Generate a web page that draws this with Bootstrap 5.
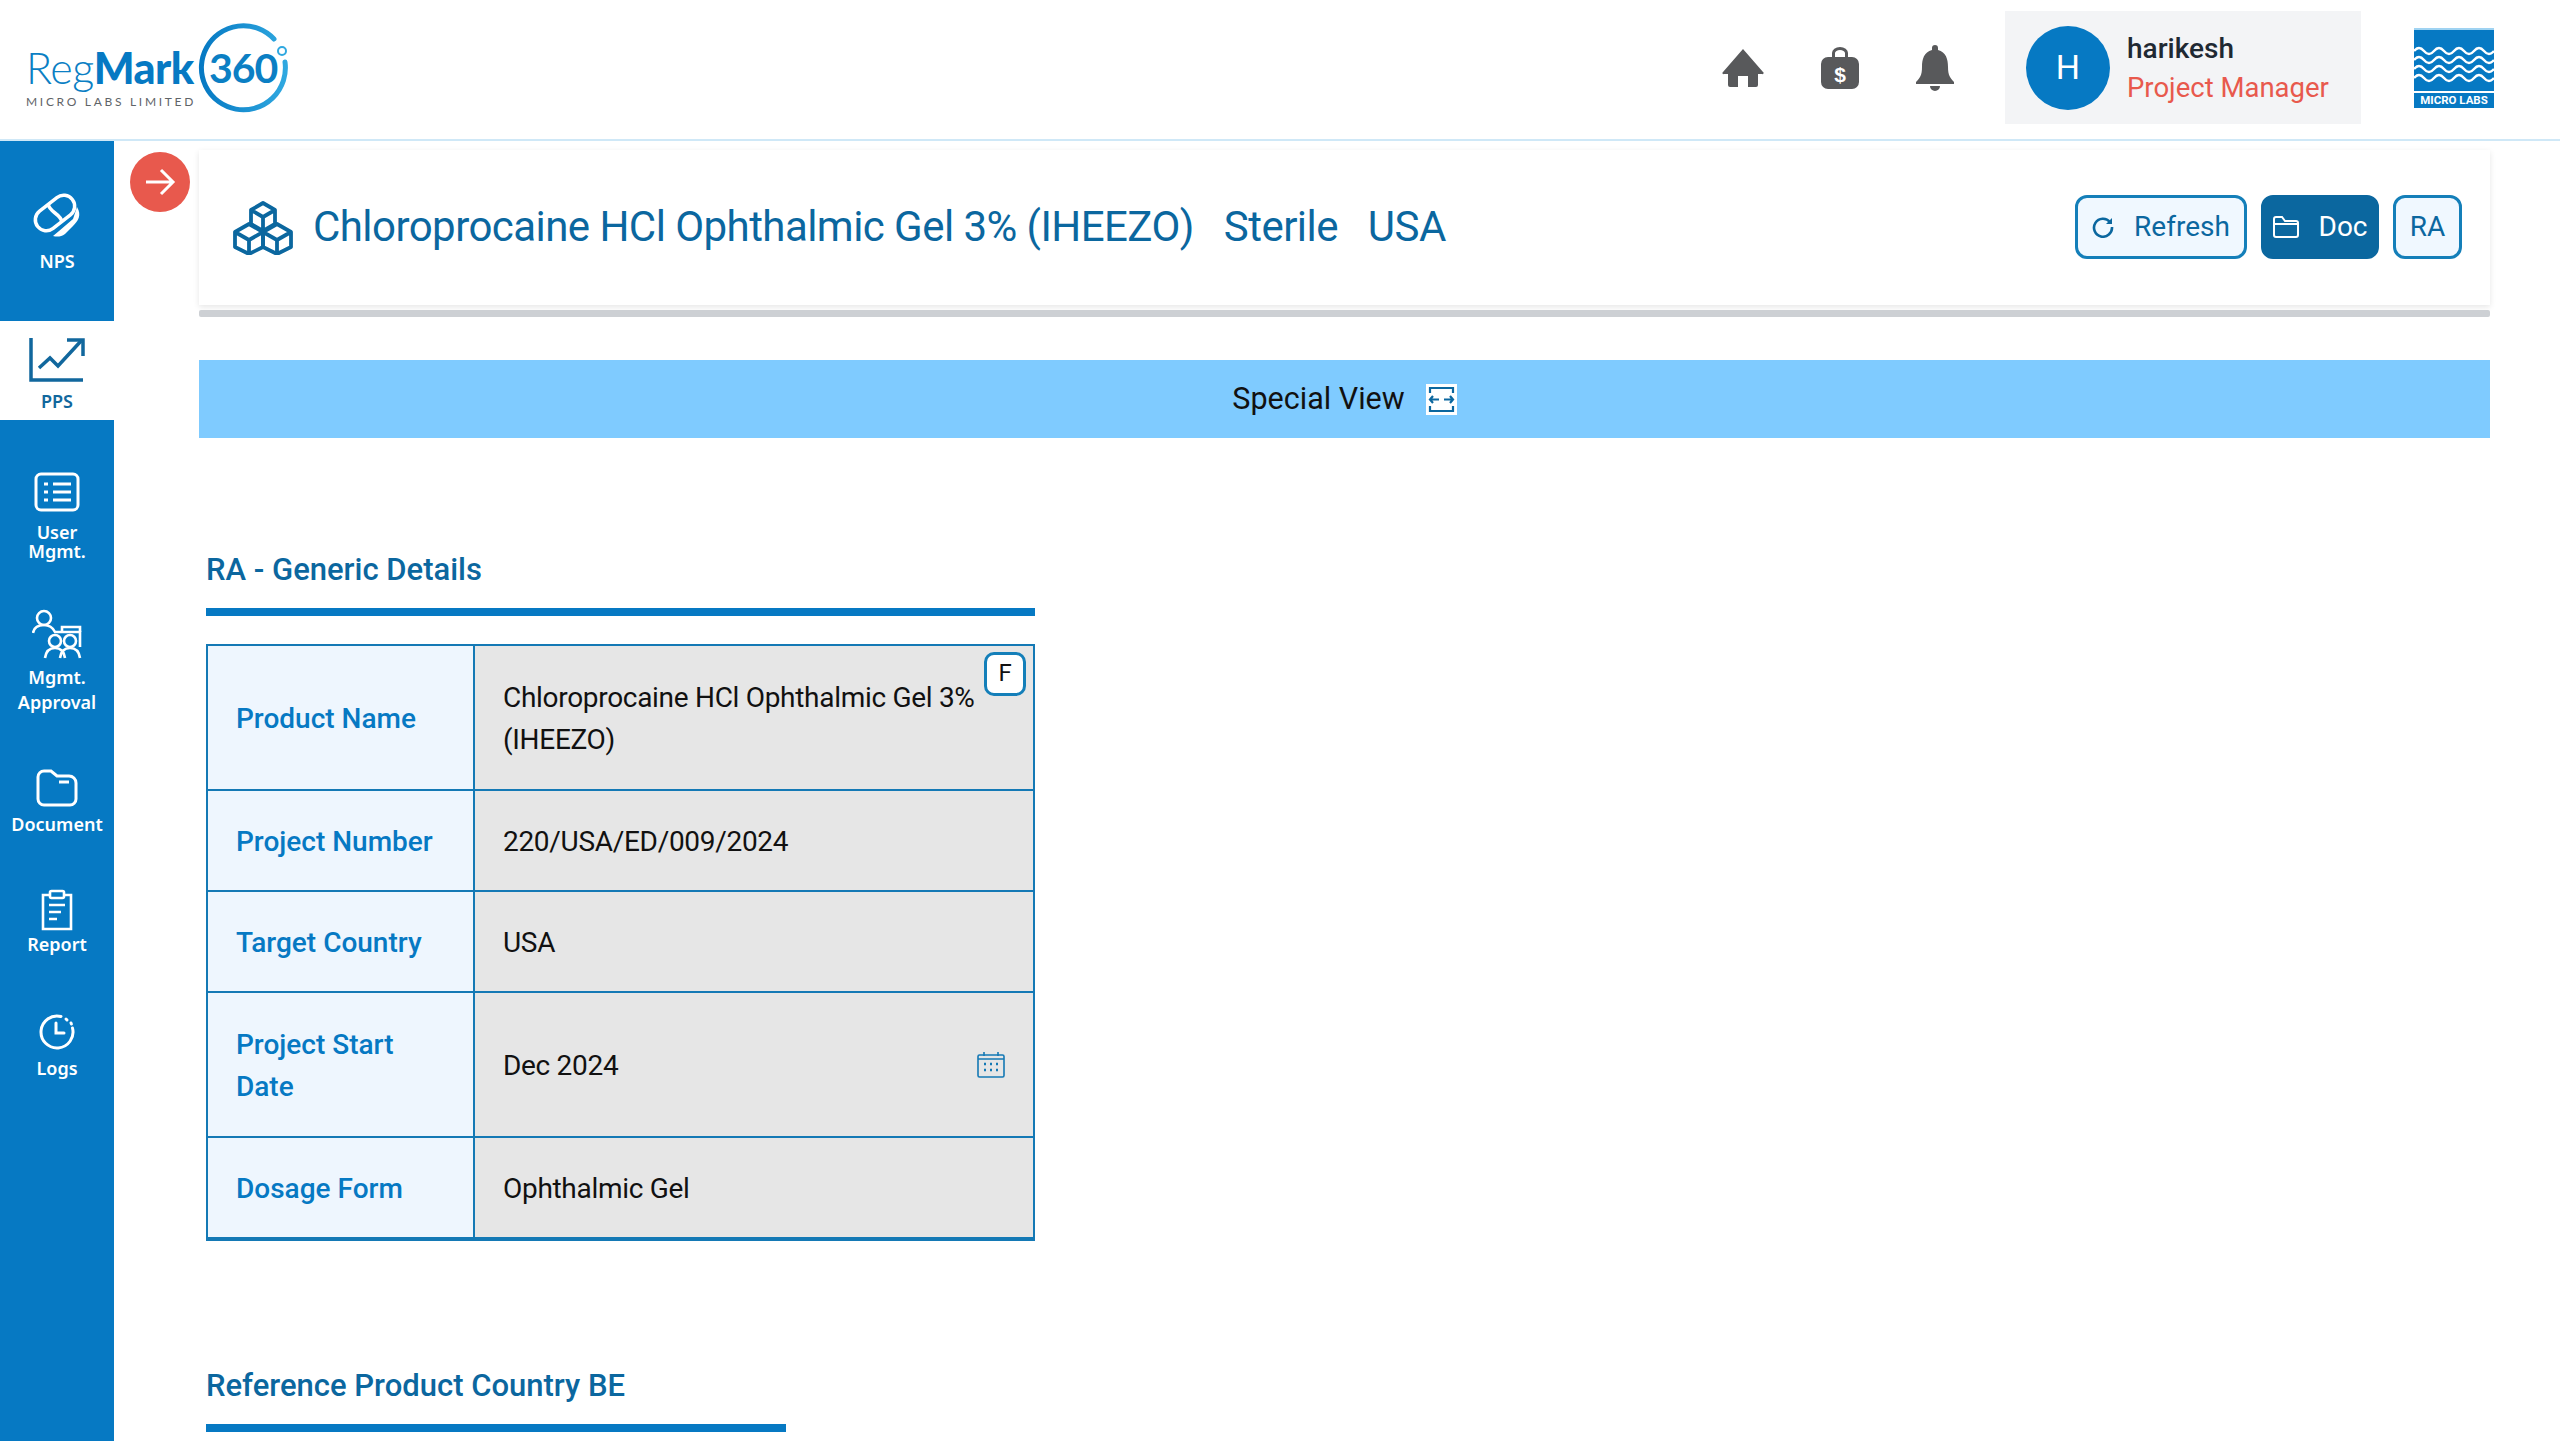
<!DOCTYPE html>
<html lang="en">
<head>
  <meta charset="UTF-8">
  <title>RegMark 360</title>
  <link href="https://cdn.jsdelivr.net/npm/bootstrap@5.3.0/dist/css/bootstrap.min.css" rel="stylesheet">
  <style>
    body { height: 1441px; overflow: hidden; font-family: Roboto, "Liberation Sans", sans-serif; background: #fff; }
    .top-head { height: 141px; border-bottom: 2px solid #cfe8f7; padding: 0 66px 4px 26px; }
    .logo-wrap { width: 264px; height: 92px; }
    .logo-reg { position: absolute; left: 0; top: 24px; font-family: Lato, sans-serif; font-size: 43px; line-height: 44px; font-weight: 300; color: #0b7fc4; letter-spacing: -.5px; }
    .logo-reg b { font-weight: 900; color: #0679c3; }
    .logo-sub { position: absolute; left: 0; top: 72px; font-family: Lato, sans-serif; font-size: 12px; line-height: 16px; letter-spacing: 2.7px; color: #5f6468; white-space: nowrap; }
    .logo-num { position: absolute; left: 183px; top: 21px; font-family: Lato, sans-serif; font-size: 41px; line-height: 50px; font-weight: 700; color: #0b7fc4; letter-spacing: -1px; }
    .logo-ring { position: absolute; left: 172px; top: 0; }
    .user-box { width: 356px; height: 113px; background: #f3f4f6; padding-left: 21px; margin-left: 51px; }
    .user-av { width: 84px; height: 84px; background: #0679c3; color: #fff; font-size: 34px; margin-right: 17px; }
    .user-name { font-size: 28px; line-height: 39px; font-weight: 500; color: #1f2933; }
    .user-role { font-size: 27.5px; line-height: 39px; color: #e8594d; }
    .ml-mark { width: 80px; height: 80px; margin-left: 53px; border-top: 2px solid #9fd3f2; }
    .ml-mark svg { display: block; }
    .ml-waves { height: 61px; background: #0679c3; }
    .ml-text { height: 15px; margin-top: 2px; background: #0679c3; color: #fff; font-size: 11.5px; line-height: 15px; font-weight: 700; text-align: center; white-space: nowrap; }
    .head-ico { color: #58595b; }
    .side-bar { width: 114px; background: #0679c3; height: 1300px; flex: 0 0 114px; }
    .side-entry { color: #fff; font-family: "Noto Sans", sans-serif; font-size: 18px; line-height: 19px; font-weight: 600; text-align: center; }
    .side-npsitem { height: 180px; padding-top: 50px; }
    .side-ppsitem { height: 99px; background: #fff; color: #11679d; padding-top: 16px; }
    .side-rest { padding-top: 52px; }
    .ent-mgmt { margin-top: 48px; }
    .ent-doc { margin-top: 54px; }
    .ent-rep { margin-top: 55px; }
    .ent-log { margin-top: 60px; }
    .lbl-nps { margin-top: 13px; }
    .lbl-pps { margin-top: 9px; }
    .lbl-user { margin-top: 11px; }
    .lbl-mgmt { margin-top: 6px; line-height: 25px; }
    .lbl-log { margin-top: 9px; }
    .main-area { padding: 9px 70px 0 85px; }
    .back-btn { position: absolute; left: 16px; top: 11px; width: 60px; height: 60px; background: #e8594d; }
    .title-card { height: 155px; padding: 0 28px 0 34px; box-shadow: 0 2px 6px rgba(0,0,0,.1); }
    .title-bar { height: 7px; margin-top: 5px; background: #cdd0d4; border-radius: 2px; }
    .title-txt { font-size: 42px; line-height: 60px; font-weight: 400; color: #0b679f; margin-left: 20px; margin-top: -1px; white-space: nowrap; letter-spacing: -.55px; }
    .title-txt span { margin-left: 30px; }
    .act-row { gap: 14px; margin-top: -2px; }
    .act-btn { height: 64px; border: 3px solid #147fb9; border-radius: 12px; background: #f0f8ff; color: #0b679f; font-size: 28px; padding: 0; line-height: 58px; }
    .act-fill { background: #0b679f; border-color: #0b679f; color: #fff; }
    .w-ref { width: 172px; } .w-doc { width: 118px; } .w-ra { width: 69px; }
    .act-gap { margin-right: 20px; }
    .view-band { height: 78px; margin-top: 43px; background: #7fcbff; font-size: 30.5px; font-weight: 400; color: #111; }
    .view-ico { width: 31px; height: 31px; background: #fff; margin-left: 21px; }
    .sec-block { padding-left: 7px; }
    .sec-head { font-size: 31px; line-height: 40px; font-weight: 500; color: #0b679f; }
    .sec-rule { height: 8px; background: #0679c3; margin-top: 18px; width: 829px; }
    .info-tbl { width: 829px; table-layout: fixed; margin: 28px 0 0; border-color: #1479b5; border-width: 2px; font-size: 28px; line-height: 42px; }
    .info-tbl > tbody > tr > th, .info-tbl > tbody > tr > td { padding: 2px 28px 0; vertical-align: middle; border-color: #1479b5; border-width: 2px; }
    .info-tbl > tbody > tr > th { width: 267px; background: #eef6fe; color: #0679c3; font-weight: 500; box-shadow: none; }
    .info-tbl > tbody > tr > td { background: #e6e6e6; color: #111; box-shadow: none; position: relative; letter-spacing: -.3px; }
    .info-tbl > tbody > tr:last-child > * { border-bottom-width: 4px; }
    .f-tag { position: absolute; right: 7px; top: 6px; width: 42px; height: 44px; background: #fff; border: 3px solid #147fb9; border-radius: 10px; font-size: 24px; line-height: 36px; text-align: center; }
    .cal-ico { position: absolute; right: 28px; top: 59px; }
    .r1 { height: 145px; } .r2 { height: 101px; } .r4 { height: 145px; } .r5 { height: 102px; }
    .sec-two { margin-top: 125px; }
    .sec-two .sec-rule { width: 580px; }
    .ico-gap-a { margin-left: 56px; }
    .ico-gap-b { margin-left: 56px; }
  </style>
</head>
<body>
  <header class="top-head d-flex align-items-center">
    <div class="logo-wrap position-relative">
      <div class="logo-reg">Reg<b>Mark</b></div>
      <div class="logo-sub">MICRO LABS LIMITED</div>
      <div class="logo-num">360</div>
      <svg class="logo-ring" width="92" height="92" viewBox="0 0 92 92" fill="none">
        <defs><linearGradient id="ringfade" x1="0" y1="0" x2="1" y2="0"><stop offset="0" stop-color="#0679c3"/><stop offset="1" stop-color="#2fa8e0"/></linearGradient></defs>
        <path d="M76 17 A42 42 0 1 0 87 40" stroke="url(#ringfade)" stroke-width="5" stroke-linecap="round"/>
        <circle cx="84" cy="29" r="4" stroke="#2fa8e0" stroke-width="2"/>
      </svg>
    </div>
    <div class="ms-auto d-flex align-items-center">
      <svg class="head-ico" width="42" height="40" viewBox="0 0 42 40" fill="currentColor"><path d="M21 1 L41 24 a1 1 0 0 1 -1 2 H36 V37 a2 2 0 0 1 -2 2 H26 V28 H16 V39 H8 a2 2 0 0 1 -2 -2 V26 H2 a1 1 0 0 1 -1 -2 Z"/></svg>
      <svg class="head-ico ico-gap-a" width="40" height="44" viewBox="0 0 40 44" fill="currentColor"><path fill-rule="evenodd" d="M12 11 V7 a8 6 0 0 1 16 0 V11 h4 a7 7 0 0 1 7 7 V36 a7 7 0 0 1 -7 7 H8 a7 7 0 0 1 -7 -7 V18 a7 7 0 0 1 7 -7 Z M15 11 h10 V7 a5 3 0 0 0 -10 0 Z"/><text x="20" y="36" text-anchor="middle" font-size="21" font-weight="700" fill="#fff" font-family="Liberation Sans, sans-serif">$</text></svg>
      <svg class="head-ico ico-gap-b" width="38" height="46" viewBox="0 0 38 46" fill="currentColor"><path d="M19 0 a3 3 0 0 1 3 3 v2 C30 7 32 14 32 22 c0 8 2 11 6 15 v2 H0 v-2 c4 -4 6 -7 6 -15 C6 14 8 7 16 5 V3 a3 3 0 0 1 3 -3 Z M14 41 h10 a5 5 0 0 1 -10 0 Z"/></svg>
      <div class="user-box d-flex align-items-center">
        <div class="user-av rounded-circle d-flex align-items-center justify-content-center">H</div>
        <div>
          <div class="user-name">harikesh</div>
          <div class="user-role">Project Manager</div>
        </div>
      </div>
      <div class="ml-mark">
        <div class="ml-waves">
          <svg width="80" height="53" viewBox="0 0 80 53" fill="none" stroke="#fff" stroke-width="2.4">
            <path d="M0 21 q5 -6 10 0 t10 0 t10 0 t10 0 t10 0 t10 0 t10 0 t10 0"/>
            <path d="M0 30 q5 -6 10 0 t10 0 t10 0 t10 0 t10 0 t10 0 t10 0 t10 0"/>
            <path d="M0 39 q5 -6 10 0 t10 0 t10 0 t10 0 t10 0 t10 0 t10 0 t10 0"/>
            <path d="M0 48 q5 -6 10 0 t10 0 t10 0 t10 0 t10 0 t10 0 t10 0 t10 0"/>
          </svg>
        </div>
        <div class="ml-text">MICRO LABS</div>
      </div>
    </div>
  </header>
  <div class="d-flex">
    <nav class="side-bar d-flex flex-column">
      <div class="side-entry side-npsitem">
        <svg width="52" height="48" viewBox="0 0 52 48" fill="none" stroke="#fff" stroke-width="3.5"><g transform="rotate(-38 24 22)"><rect x="2" y="11" width="44" height="22" rx="11"/><path d="M24 11 C20 18 28 26 24 33"/></g><path d="M46 16 c5 8 1 14 -4 19 l-8 8 c-4 3 -8 3 -12 2 l6 -5 l14 -12 Z" fill="#fff" stroke="none"/></svg>
        <div class="lbl-nps">NPS</div>
      </div>
      <div class="side-entry side-ppsitem">
        <svg width="56" height="46" viewBox="0 0 56 46" fill="none" stroke="#11679d" stroke-width="3.5"><path d="M2 1 V43 H54"/><path d="M10 31 L21 21 L29 29 L52 4"/><path d="M38 3 H54 V19"/></svg>
        <div class="lbl-pps">PPS</div>
      </div>
      <div class="side-rest d-flex flex-column">
        <div class="side-entry">
          <svg width="46" height="40" viewBox="0 0 46 40" fill="none" stroke="#fff" stroke-width="3"><rect x="2" y="2" width="42" height="36" rx="5"/><path d="M19 12 H37 M19 20 H37 M19 28 H37"/><path d="M10 12 H14 M10 20 H14 M10 28 H14"/></svg>
          <div class="lbl-user">User<br>Mgmt.</div>
        </div>
        <div class="side-entry ent-mgmt">
          <svg width="50" height="50" viewBox="0 0 50 50" fill="none" stroke="#fff" stroke-width="2.6"><circle cx="12" cy="9" r="7"/><path d="M1 24 c1 -6 5 -8 11 -8 c6 0 9 3 11 7 H48 V38"/><path d="M30 23 V18 H48 V23"/><circle cx="23" cy="32" r="6"/><circle cx="38" cy="32" r="6"/><path d="M13 49 c1 -7 5 -10 10 -10 c5 0 9 3 10 10 M28 49 c1 -7 5 -10 10 -10 c5 0 9 3 10 10"/></svg>
          <div class="lbl-mgmt">Mgmt.<br>Approval</div>
        </div>
        <div class="side-entry ent-doc">
          <svg width="42" height="38" viewBox="0 0 42 38" fill="none" stroke="#fff" stroke-width="3"><path d="M2 8 a6 6 0 0 1 6 -6 H15 L21 7 H33 a7 7 0 0 1 7 7 V30 a6 6 0 0 1 -6 6 H8 a6 6 0 0 1 -6 -6 Z"/><path d="M23 13 H33"/></svg>
          <div class="mt-2">Document</div>
        </div>
        <div class="side-entry ent-rep">
          <svg width="32" height="42" viewBox="0 0 32 42" fill="none" stroke="#fff" stroke-width="2.6"><path d="M9 6 H2 V40 H30 V6 H23"/><rect x="9" y="2" width="14" height="7" rx="1.5"/><path d="M8 16 H24 M8 23 H20 M8 30 H16"/></svg>
          <div class="mt-1">Report</div>
        </div>
        <div class="side-entry ent-log">
          <svg width="36" height="36" viewBox="0 0 36 36" fill="none" stroke="#fff" stroke-width="3" stroke-linecap="round"><path d="M22 2.5 A16 16 0 1 0 33.5 14"/><path d="M27 5 L28 6 M32 9 L32.4 10"/><path d="M17 9 V19 H25"/></svg>
          <div class="lbl-log">Logs</div>
        </div>
      </div>
    </nav>
    <main class="main-area flex-grow-1 position-relative">
      <button class="back-btn btn rounded-circle p-0 border-0 d-flex align-items-center justify-content-center" type="button" aria-label="Back">
        <svg width="32" height="30" viewBox="0 0 32 30" fill="none" stroke="#fff" stroke-width="3"><path d="M2 15 H29 M17 3 L29 15 L17 27"/></svg>
      </button>
      <div class="title-card bg-white d-flex align-items-center">
        <svg width="60" height="54" viewBox="0 0 60 54" fill="none" stroke="#0b679f" stroke-width="3.8" stroke-linejoin="round"><path d="M30 2 L42 9 V23 L30 30 L18 23 V9 Z M18 9 L30 16 L42 9 M30 16 V30"/><path d="M16 23 L30 31 V46 L16 53 L2 46 V31 Z M2 31 L16 39 L30 31 M16 39 V53"/><path d="M44 23 L58 31 V46 L44 53 L30 46 V31 Z M30 31 L44 39 L58 31 M44 39 V53"/></svg>
        <div class="title-txt">Chloroprocaine HCl Ophthalmic Gel 3% (IHEEZO)<span>Sterile</span><span>USA</span></div>
        <div class="ms-auto d-flex act-row align-items-center">
          <button class="act-btn w-ref d-flex align-items-center justify-content-center" type="button">
            <svg class="act-gap" width="22" height="22" viewBox="0 0 22 22" fill="none" stroke="currentColor" stroke-width="2.6"><path d="M18 6 A9 9 0 1 0 20 11"/><path d="M20 2 V8 H14" fill="currentColor" stroke="none"/></svg>Refresh</button>
          <button class="act-btn act-fill w-doc d-flex align-items-center justify-content-center" type="button">
            <svg class="act-gap" width="26" height="22" viewBox="0 0 26 22" fill="none" stroke="currentColor" stroke-width="2"><path d="M1 19 V3 a2 2 0 0 1 2 -2 H9 L12 5 H23 a2 2 0 0 1 2 2 V19 a2 2 0 0 1 -2 2 H3 a2 2 0 0 1 -2 -2 Z M1 8 H25"/></svg>Doc</button>
          <button class="act-btn w-ra" type="button">RA</button>
        </div>
      </div>
      <div class="title-bar"></div>
      <div class="view-band d-flex align-items-center justify-content-center">
        Special View
        <svg class="view-ico" viewBox="0 0 31 31" fill="none" stroke="#0b679f" stroke-width="2.2"><path d="M4 9 V4 H27 V9 M4 22 V27 H27 V22"/><path d="M4 15.5 H13 M7 12 L4 15.5 L7 19 M18 15.5 H27 M24 12 L27 15.5 L24 19"/></svg>
      </div>
      <section class="sec-block" style="margin-top:112px">
        <h2 class="sec-head mb-0">RA - Generic Details</h2>
        <div class="sec-rule"></div>
        <table class="info-tbl table table-bordered">
          <tbody>
            <tr class="r1"><th>Product Name</th><td>Chloroprocaine HCl Ophthalmic Gel 3% (IHEEZO)<span class="f-tag">F</span></td></tr>
            <tr class="r2"><th>Project Number</th><td>220/USA/ED/009/2024</td></tr>
            <tr class="r2"><th>Target Country</th><td>USA</td></tr>
            <tr class="r4"><th>Project Start Date</th><td>Dec 2024
              <svg class="cal-ico" width="28" height="26" viewBox="0 0 28 26" fill="none" stroke="#1479b5" stroke-width="1.6"><rect x="1" y="3" width="26" height="22" rx="1.5"/><path d="M7 0 V4 M21 0 V4 M1 7 H27"/><path d="M7 12 h2 M13 12 h2 M19 12 h2 M7 18 h2 M13 18 h2 M19 18 h2" stroke-width="2.6"/></svg>
            </td></tr>
            <tr class="r5"><th>Dosage Form</th><td>Ophthalmic Gel</td></tr>
          </tbody>
        </table>
      </section>
      <section class="sec-block sec-two">
        <h2 class="sec-head mb-0">Reference Product Country BE</h2>
        <div class="sec-rule"></div>
      </section>
    </main>
  </div>
  <script src="https://cdn.jsdelivr.net/npm/bootstrap@5.3.0/dist/js/bootstrap.bundle.min.js"></script>
</body>
</html>
